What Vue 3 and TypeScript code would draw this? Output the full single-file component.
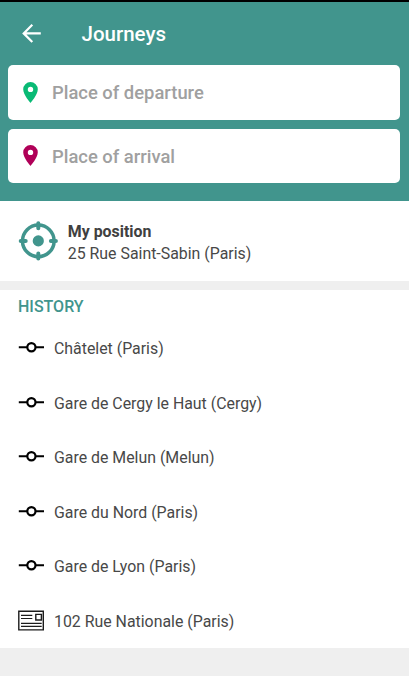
<script setup lang="ts">
interface Place {
  label: string
  kind: 'stop' | 'address'
}

const fields = [
  { label: 'Place of departure', color: '#09ba75' },
  { label: 'Place of arrival', color: '#b00058' },
]

const history: Place[] = [
  { label: 'Châtelet (Paris)', kind: 'stop' },
  { label: 'Gare de Cergy le Haut (Cergy)', kind: 'stop' },
  { label: 'Gare de Melun (Melun)', kind: 'stop' },
  { label: 'Gare du Nord (Paris)', kind: 'stop' },
  { label: 'Gare de Lyon (Paris)', kind: 'stop' },
  { label: '102 Rue Nationale (Paris)', kind: 'address' },
]
</script>

<template>
  <main class="screen">
    <header class="header">
      <div class="bar">
        <svg class="back" viewBox="0 0 20 20" width="20" height="20">
          <path d="M18.8 10.4H2M10.3 1.8L1.7 10.4l8.6 8.6" fill="none" stroke="#fff" stroke-width="2.2" />
        </svg>
        <h1 class="title">Journeys</h1>
      </div>
      <div class="fields">
        <div v-for="field in fields" :key="field.label" class="field">
          <svg class="pin" viewBox="0 0 15 21" width="15" height="21">
            <path
              :fill="field.color"
              fill-rule="evenodd"
              d="M7.5 0A7.3 7.3 0 0 0 .2 7.3C.2 12.8 7.5 21 7.5 21s7.3-8.2 7.3-13.7A7.3 7.3 0 0 0 7.5 0zm0 4.7a2.7 2.7 0 1 1 0 5.4 2.7 2.7 0 0 1 0-5.4z"
            />
          </svg>
          <span class="placeholder">{{ field.label }}</span>
        </div>
      </div>
    </header>

    <section class="position">
      <svg class="target" viewBox="0 0 40 40" width="40" height="40">
        <circle cx="20.3" cy="19.9" r="15.8" fill="none" stroke="#41958d" stroke-width="3.5" />
        <circle cx="20.3" cy="19.9" r="5.6" fill="#41958d" />
        <path
          d="M20.3 2.3v5M20.3 32.5v5M2.7 19.9h5M32.9 19.9h5"
          stroke="#41958d"
          stroke-width="4"
          stroke-linecap="round"
        />
      </svg>
      <div class="place">
        <div class="name">My position</div>
        <div class="address">25 Rue Saint-Sabin (Paris)</div>
      </div>
    </section>

    <section class="history">
      <h2 class="heading">HISTORY</h2>
      <ul class="list">
        <li v-for="place in history" :key="place.label" class="row">
          <svg v-if="place.kind === 'stop'" class="icon" viewBox="0 0 26 22" width="26" height="22">
            <path d="M.8 10.2h8.6M17.4 10.2h8.6" stroke="#000" stroke-width="1.9" />
            <circle cx="13.4" cy="10.2" r="4.1" fill="#fff" stroke="#000" stroke-width="2.2" />
          </svg>
          <svg v-else class="icon" viewBox="0 0 26 22" width="26" height="22">
            <g fill="none" stroke="#1c1c1c">
              <path d="M.8 1.2h24.5v18.7H.8z" stroke-width="1.4" />
              <path d="M17.8 4.4h5.6V10h-5.6z" stroke-width="1.4" />
              <path d="M3 5.4h11.3M3 8.5h11.3M3 13.3h20.7M3 16.4h20.7" stroke-width="1.2" />
            </g>
          </svg>
          <span class="label">{{ place.label }}</span>
        </li>
      </ul>
    </section>
  </main>
</template>

<style>
body {
  margin: 0;
  background: #efefef;
}
</style>

<style scoped>
.screen {
  height: 676px;
  overflow: hidden;
  background: #efefef;
  color: #484848;
  font-family: Roboto, sans-serif;
}

.header {
  box-sizing: border-box;
  height: 201.3px;
  border-top: 2px solid #000;
  background: #41958d;
}

.bar {
  display: flex;
  align-items: center;
  height: 63px;
  padding-left: 22px;
}

.back {
  margin-bottom: 1px;
}

.title {
  margin: 1px 0 0 39.5px;
  color: #fff;
  font-size: 20.5px;
  font-weight: 500;
  line-height: 24px;
}

.fields {
  display: flex;
  flex-direction: column;
  gap: 9px;
  padding: 0 9.2px 0 8.4px;
}

.field {
  display: flex;
  align-items: center;
  box-sizing: border-box;
  height: 54.6px;
  padding-left: 14.6px;
  border-radius: 5px;
  background: #fff;
}

.placeholder {
  margin-left: 14px;
  padding-top: 2px;
  color: #a0a0a0;
  font-size: 18.4px;
  font-weight: 500;
  line-height: 22px;
}

.position {
  display: flex;
  align-items: center;
  box-sizing: border-box;
  height: 79.7px;
  padding-left: 18.3px;
  background: #fff;
}

.position .target {
  margin-right: 9.5px;
}

.place {
  padding-top: 2.5px;
}

.name,
.address {
  font-size: 15.88px;
}

.name {
  color: #404040;
  font-weight: 700;
  line-height: 22px;
}

.address {
  line-height: 21px;
}

.history {
  margin-top: 9px;
  background: #fff;
}

.heading {
  box-sizing: border-box;
  height: 30.8px;
  margin: 0;
  padding: 7px 0 0 18px;
  color: #41958d;
  font-size: 16px;
  font-weight: 500;
  line-height: 20px;
}

.list {
  margin: 0;
  padding: 0;
  list-style: none;
}

.row {
  display: flex;
  align-items: center;
  gap: 10px;
  height: 54.5px;
  padding-left: 18px;
  font-size: 15.88px;
  line-height: 20px;
}

.label {
  padding-top: 2px;
}
</style>
